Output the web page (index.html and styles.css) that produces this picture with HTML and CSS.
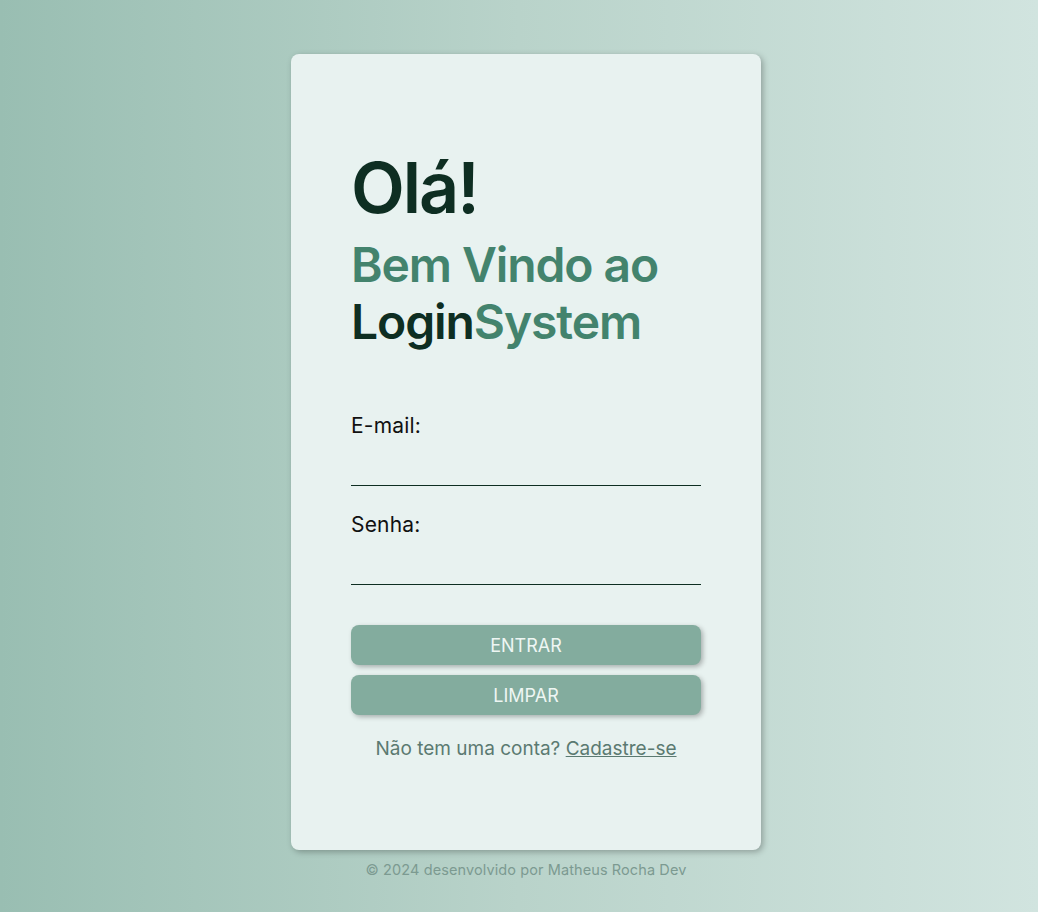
FILE: index.html
```html
<!DOCTYPE html>
<html lang="pt-BR">
<head>
<meta charset="utf-8">
<title>LoginSystem</title>
<link rel="stylesheet" href="styles.css">
</head>
<body>
<main class="page">
  <section class="card">
    <h1 class="hello">Olá!</h1>
    <h2 class="welcome"><span class="accent">Bem Vindo ao</span><br><span class="dark">Login</span><span class="accent">System</span></h2>
    <form class="form">
      <label class="field">
        <span class="label">E-mail:</span>
        <input class="input" type="email">
      </label>
      <label class="field">
        <span class="label">Senha:</span>
        <input class="input" type="password">
      </label>
      <div class="actions">
        <button type="button" class="btn">ENTRAR</button>
        <button type="button" class="btn">LIMPAR</button>
      </div>
      <p class="signup">Não tem uma conta? <a href="#" class="signup-link">Cadastre-se</a></p>
    </form>
  </section>
  <footer class="footer">© 2024 desenvolvido por Matheus Rocha Dev</footer>
</main>
</body>
</html>
```

FILE: styles.css
```css
* { box-sizing: border-box; }
html, body { margin: 0; height: 100%; }
body {
  font-family: Inter, "Open Sans", sans-serif;
  background: linear-gradient(90deg, #99beb2 0%, #b9d3ca 50%, #d1e4df 100%);
}
.page {
  display: flex;
  flex-direction: column;
  align-items: center;
  padding-top: 54px;
  min-height: 100%;
}
.card {
  width: 470px;
  height: 796px;
  margin-left: 14px;
  background: #e8f2f0;
  border-radius: 8px;
  box-shadow: 2px 2px 6px rgba(0, 0, 0, 0.28);
  padding: 94px 60px 0;
}
.hello {
  margin: 0;
  font-size: 70px;
  font-weight: 600;
  letter-spacing: -2px;
  line-height: 80px;
  color: #0e2e22;
}
.welcome {
  margin: 8px 0 0;
  font-size: 48px;
  font-weight: 600;
  letter-spacing: -1.1px;
  line-height: 57px;
}
.accent { color: #43836d; }
.dark { color: #0e2e22; }
.form {
  margin-top: 62px;
  display: flex;
  flex-direction: column;
}
.field {
  display: flex;
  flex-direction: column;
  margin-bottom: 25px;
}
.label {
  font-size: 21px;
  letter-spacing: 0.2px;
  line-height: 28px;
  color: #111;
}
.input {
  border: none;
  border-bottom: 1px solid #0e2e22;
  background: transparent;
  height: 46px;
  width: 350px;
  outline: none;
  font-size: 18px;
}
.actions {
  margin-top: 15px;
  display: flex;
  flex-direction: column;
  gap: 10px;
}
.btn {
  height: 40px;
  width: 350px;
  border: none;
  border-radius: 8px;
  background: #83ac9e;
  color: #eef6f3;
  font-family: inherit;
  font-size: 18px;
  box-shadow: 2px 2px 5px rgba(0, 0, 0, 0.28);
}
.signup {
  margin: 22px 0 0;
  width: 350px;
  text-align: center;
  font-size: 19px;
  color: #5b7a71;
}
.signup-link { color: #5b7a71; }
.footer {
  margin-top: 11px;
  margin-left: 14px;
  font-size: 14.5px;
  letter-spacing: 0.1px;
  color: #7c9a91;
}
```
